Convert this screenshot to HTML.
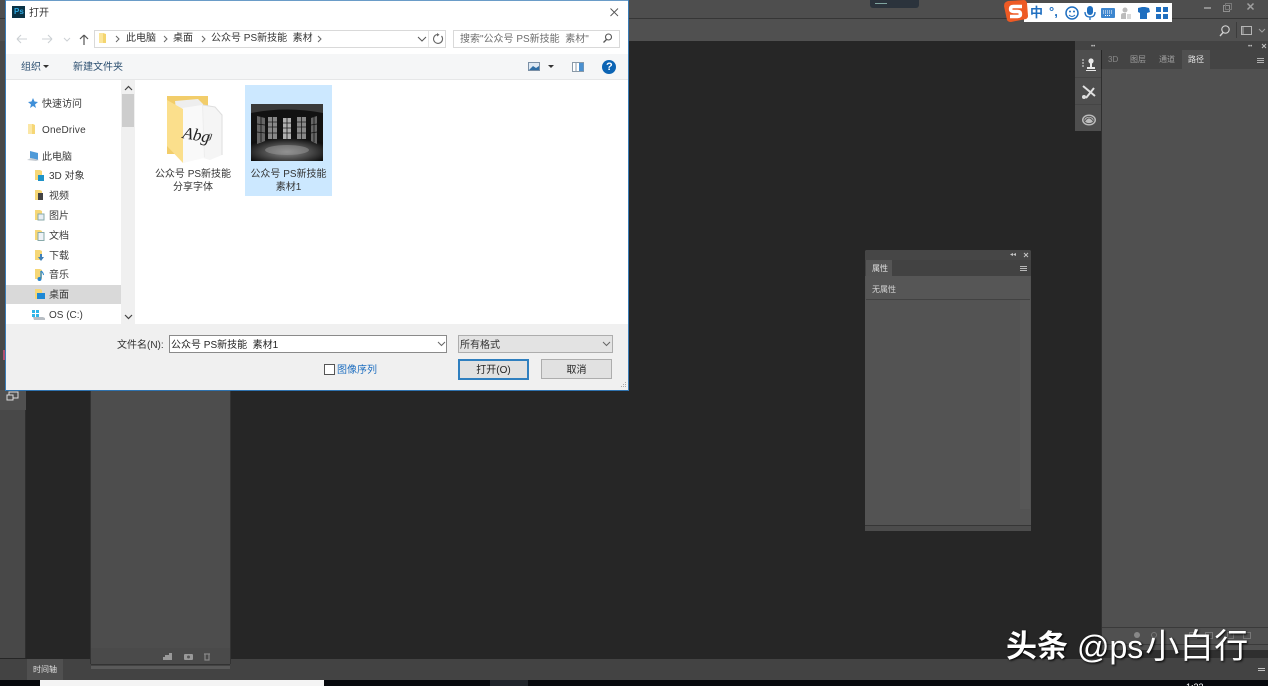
<!DOCTYPE html>
<html lang="zh">
<head>
<meta charset="utf-8">
<title>打开</title>
<style>
html,body{margin:0;padding:0;background:#262626;}
#r{position:relative;width:1268px;height:686px;overflow:hidden;background:#262626;font-family:"Liberation Sans","Noto Sans CJK SC",sans-serif;font-size:10px;color:#222;}
.a{position:absolute;}
.t{position:absolute;white-space:nowrap;line-height:14px;}
.n{font-size:10px;color:#3a3a3a;}
svg{position:absolute;overflow:visible;}
.p{font-size:8px;color:#a8a8a8;}
</style>
</head>
<body>
<div id="r">
<!-- Photoshop chrome -->
<div class="a" style="left:0;top:0;width:1268px;height:18px;background:#4e4e4e"></div>
<div class="a" style="left:0;top:18px;width:1268px;height:1px;background:#363636"></div>
<div class="a" style="left:0;top:19px;width:1268px;height:22px;background:#505050"></div>
<div class="a" style="left:870px;top:0;width:49px;height:8px;background:#2b333c;border-radius:0 0 3px 3px"></div>
<div class="a" style="left:875px;top:3px;width:12px;height:1px;background:#7fa5a0"></div>
<div class="a" style="left:0;top:41px;width:26px;height:617px;background:#484848"></div>
<div class="a" style="left:25px;top:41px;width:1px;height:617px;background:#2e2e2e"></div>
<!-- window controls -->
<div class="a" style="left:1204px;top:7px;width:7px;height:2px;background:#8f8f8f"></div>
<div class="a" style="left:1223px;top:5px;width:5px;height:5px;border:1px solid #8f8f8f"></div>
<div class="a" style="left:1225px;top:3px;width:5px;height:5px;border:1px solid #777"></div>
<svg style="left:1246px;top:2px" width="10" height="10"><path d="M1.500 1.500L7.500 7.500M7.500 1.500L1.500 7.500" stroke="#a0a0a0" stroke-width="1.500"/></svg>
<!-- search + workspace -->
<svg style="left:1218px;top:24px" width="14" height="14"><circle cx="7.500" cy="5.500" r="3.700" fill="none" stroke="#d0d0d0" stroke-width="1.200"/><path d="M5 8.500L2 12" stroke="#d0d0d0" stroke-width="1.400"/></svg>
<div class="a" style="left:1236px;top:22px;width:1px;height:16px;background:#3c3c3c"></div>
<div class="a" style="left:1241px;top:26px;width:9px;height:7px;border:1px solid #b5b5b5"></div>
<div class="a" style="left:1241px;top:26px;width:3px;height:9px;background:#b5b5b5;opacity:.45"></div>
<svg style="left:1258px;top:28px" width="8" height="5"><path d="M1 1L4 4L7 1" stroke="#a0a0a0" fill="none"/></svg>
<!-- right icon strip -->
<div class="a" style="left:1075px;top:41px;width:193px;height:9px;background:#434343"></div>
<div class="a" style="left:1075px;top:50px;width:26px;height:81px;background:#4e4e4e"></div>
<div class="a" style="left:1075px;top:77px;width:26px;height:1px;background:#454545"></div>
<div class="a" style="left:1075px;top:104px;width:26px;height:1px;background:#454545"></div>
<div class="t" style="left:1091px;top:40px;font-size:6px;color:#c0c0c0">••</div>
<div class="t" style="left:1248px;top:40px;font-size:6px;color:#c0c0c0">••</div>
<svg style="left:1261px;top:43px" width="6" height="6"><path d="M1 1L5 5M5 1L1 5" stroke="#c0c0c0"/></svg>
<svg style="left:1081px;top:57px" width="16" height="15"><path d="M1 3h2M1 6h2M1 9h2" stroke="#e0e0e0"/><circle cx="10" cy="4" r="2.600" fill="#e8e8e8"/><path d="M9 6h2v4h3v2H6v-2h3zM5 13h10v1H5z" fill="#e8e8e8"/></svg>
<svg style="left:1081px;top:85px" width="16" height="15"><path d="M2 1L14 11M5 13L13 3" stroke="#e0e0e0" stroke-width="2"/><circle cx="3" cy="12" r="2" fill="#ddd"/></svg>
<svg style="left:1081px;top:112px" width="16" height="15"><ellipse cx="8" cy="8" rx="7" ry="5.500" fill="#bdbdbd"/><ellipse cx="8" cy="8" rx="5" ry="3.600" fill="none" stroke="#555"/><path d="M4 9Q8 3 12 9" stroke="#555" fill="none"/></svg>
<!-- right panel -->
<div class="a" style="left:1102px;top:50px;width:166px;height:19px;background:#444"></div>
<div class="a" style="left:1182px;top:50px;width:28px;height:19px;background:#505050"></div>
<div class="a" style="left:1102px;top:69px;width:166px;height:589px;background:#505050"></div>
<div class="a" style="left:1101px;top:69px;width:1px;height:589px;background:#2f2f2f"></div>
<div class="t p" style="left:1108px;top:53px;color:#8a8a8a">3D</div>
<div class="t p" style="left:1130px;top:53px;color:#a0a0a0">图层</div>
<div class="t p" style="left:1159px;top:53px;color:#a0a0a0">通道</div>
<div class="t p" style="left:1188px;top:53px;color:#e6e6e6">路径</div>
<div class="a" style="left:1257px;top:58px;width:7px;height:1px;background:#b0b0b0;box-shadow:0 2px 0 #b0b0b0,0 4px 0 #b0b0b0"></div>
<div class="a" style="left:1102px;top:627px;width:166px;height:1px;background:#3a3a3a"></div>
<div class="a" style="left:1102px;top:644px;width:166px;height:1px;background:#3a3a3a"></div>
<div class="a" style="left:1102px;top:650px;width:166px;height:9px;background:#2f2f2f"></div>
<div class="a" style="left:1134px;top:632px;width:6px;height:6px;border-radius:50%;background:#888"></div>
<div class="a" style="left:1151px;top:632px;width:4px;height:4px;border-radius:50%;border:1px solid #777"></div>
<div class="a" style="left:1189px;top:632px;width:6px;height:5px;border:1px solid #777"></div>
<div class="a" style="left:1205px;top:632px;width:6px;height:5px;border:1px solid #777"></div>
<div class="a" style="left:1227px;top:632px;width:5px;height:5px;border:1px solid #777"></div>
<div class="a" style="left:1243px;top:632px;width:6px;height:5px;border:1px solid #777"></div>
<!-- properties panel -->
<div class="a" style="left:865px;top:250px;width:166px;height:281px;background:#535353;border-radius:2px"></div>
<div class="a" style="left:865px;top:250px;width:166px;height:10px;background:#464646;border-radius:2px 2px 0 0"></div>
<div class="a" style="left:865px;top:260px;width:166px;height:16px;background:#424242"></div>
<div class="a" style="left:866px;top:260px;width:26px;height:16px;background:#555"></div>
<div class="a" style="left:866px;top:276px;width:164px;height:24px;background:#565656"></div>
<div class="a" style="left:866px;top:299px;width:164px;height:1px;background:#424242"></div>
<div class="a" style="left:1020px;top:300px;width:10px;height:209px;background:#575757"></div>
<div class="a" style="left:865px;top:525px;width:166px;height:1px;background:#363636"></div>
<div class="a" style="left:865px;top:526px;width:166px;height:5px;background:#4c4c4c"></div>
<div class="t p" style="left:872px;top:262px;color:#e0e0e0">属性</div>
<div class="t p" style="left:872px;top:283px;color:#d5d5d5">无属性</div>
<div class="t" style="left:1010px;top:248px;font-size:6px;color:#c5c5c5">◂◂</div>
<svg style="left:1023px;top:252px" width="6" height="6"><path d="M1 1L5 5M5 1L1 5" stroke="#c5c5c5"/></svg>
<div class="a" style="left:1020px;top:266px;width:7px;height:1px;background:#b8b8b8;box-shadow:0 2px 0 #b8b8b8,0 4px 0 #b8b8b8"></div>
<!-- timeline -->
<div class="a" style="left:0;top:659px;width:1102px;height:21px;background:#434343"></div>
<div class="a" style="left:27px;top:659px;width:36px;height:21px;background:#505050"></div>
<div class="t" style="left:33px;top:663px;font-size:8px;color:#e0e0e0">时间轴</div>
<div class="a" style="left:1102px;top:658px;width:166px;height:22px;background:#434343"></div>
<div class="a" style="left:1258px;top:668px;width:7px;height:1px;background:#c0c0c0;box-shadow:0 2px 0 #c0c0c0"></div>
<!-- left floating panel -->
<div class="a" style="left:91px;top:390px;width:139px;height:274px;background:#4d4d4d"></div>
<div class="a" style="left:91px;top:648px;width:139px;height:16px;background:#4a4a4a"></div>
<div class="a" style="left:90px;top:390px;width:1px;height:274px;background:#333"></div>
<div class="a" style="left:230px;top:390px;width:1px;height:274px;background:#333"></div>
<div class="a" style="left:91px;top:664px;width:139px;height:1px;background:#333"></div>
<div class="a" style="left:91px;top:666px;width:139px;height:3px;background:#5a5a5a"></div>
<svg style="left:162px;top:652px" width="50" height="10"><path d="M1 8V5h2V3h4V1h3v7z" fill="#999"/><rect x="22" y="2" width="9" height="6" rx="1" fill="#999"/><circle cx="26.500" cy="5" r="1.500" fill="#555"/><path d="M43 2h4v6h-4zM42 2h6" fill="none" stroke="#888" stroke-width="1.200"/></svg>
<!-- bottom taskbar -->
<div class="a" style="left:0;top:680px;width:1268px;height:6px;background:#06080d"></div>
<div class="a" style="left:40px;top:680px;width:284px;height:6px;background:#f4f4f4"></div>
<div class="a" style="left:490px;top:680px;width:38px;height:6px;background:#20242a"></div>
<div class="t" style="left:1186px;top:680px;font-size:9px;color:#fff">1:22</div>
<!-- left strip bits under the dialog -->
<div class="a" style="left:0;top:390px;width:26px;height:20px;background:#505050"></div>
<svg style="left:6px;top:391px" width="14" height="12"><rect x="3" y="1" width="9" height="6" fill="none" stroke="#ddd"/><rect x="1" y="4" width="6" height="5" fill="#505050" stroke="#ddd"/></svg>
<div class="a" style="left:3px;top:350px;width:3px;height:10px;background:#b05070"></div>
<!-- Sogou IME -->
<div class="a" style="left:1024px;top:3px;width:148px;height:19px;background:#fff"></div>
<svg style="left:1002px;top:0" width="26" height="23"><path d="M6 1L22 0Q24 0 25 3L26 16Q26 18 24 19L9 22Q6 22 5 20L2 6Q2 2 6 1z" fill="#ee5a24"/><path d="M20 6.500H11.500Q8.500 6.500 8.500 9T11.500 11.500H15.500Q18.500 11.500 18.500 14T15.500 16.500H8" fill="none" stroke="#fff" stroke-width="3.400"/></svg>
<div class="t" style="left:1030px;top:6px;font-size:13px;font-weight:bold;color:#1f6fc0">中</div>
<div class="t" style="left:1049px;top:5px;font-size:13px;font-weight:bold;color:#1f6fc0">°,</div>
<svg style="left:1065px;top:5px" width="110" height="16"><circle cx="7" cy="8" r="6" fill="none" stroke="#1f6fc0" stroke-width="1.500"/><circle cx="5" cy="6.500" r="1" fill="#1f6fc0"/><circle cx="9" cy="6.500" r="1" fill="#1f6fc0"/><path d="M4 10Q7 13 10 10" fill="none" stroke="#1f6fc0"/><rect x="22" y="1" width="6" height="9" rx="3" fill="#1f6fc0"/><path d="M20 7Q20 12 25 12T30 7M25 12v3" fill="none" stroke="#1f6fc0" stroke-width="1.300"/><rect x="36" y="3" width="14" height="10" rx="1" fill="#3d86cf"/><path d="M38 6h10M38 8h10M40 10.500h6" stroke="#fff" stroke-dasharray="1 1"/><circle cx="60" cy="5" r="2.500" fill="#bcbcbc"/><path d="M56 14V10Q56 8 59 8H61V14z" fill="#bcbcbc"/><rect x="62" y="9" width="4" height="5" fill="#d8d8d8"/><path d="M73 3L77 2H80L84 3L85 7L82 8V14H75V8L73 7z" fill="#1f6fc0"/><rect x="91" y="2" width="5" height="5" fill="#1f6fc0"/><rect x="98" y="2" width="5" height="5" fill="#1f6fc0"/><rect x="91" y="9" width="5" height="5" fill="#1f6fc0"/><rect x="98" y="9" width="5" height="5" fill="#1f6fc0"/></svg>
<!-- Dialog -->
<div class="a" style="left:6px;top:0;width:622px;height:390px;background:#fff"></div>
<div class="a" style="left:6px;top:0;width:622px;height:1px;background:#6a9cc8"></div>
<div class="a" style="left:5px;top:390px;width:624px;height:1px;background:#2f72ae"></div>
<div class="a" style="left:5px;top:0;width:1px;height:391px;background:#3a7cb6"></div>
<div class="a" style="left:628px;top:0;width:1px;height:391px;background:#3a7cb6"></div>
<div class="a" style="left:12px;top:6px;width:13px;height:12px;background:#0a3244"></div>
<div class="t" style="left:14px;top:5px;font-size:8px;font-weight:bold;color:#2fa8e0">Ps</div>
<div class="t" style="left:29px;top:7px;font-size:10px;color:#333">打开</div>
<svg style="left:609px;top:7px" width="12" height="12"><path d="M1.500 1.500L9 9M9 1.500L1.500 9" stroke="#555" stroke-width=".9"/></svg>
<!-- nav arrows -->
<svg style="left:15px;top:32px" width="85" height="15"><path d="M2 7H12M2 7L6 3M2 7L6 11" stroke="#ccd0d4" stroke-width="1.100" fill="none"/><path d="M37 7H27M37 7L33 3M37 7L33 11" stroke="#ccd0d4" stroke-width="1.100" fill="none"/><path d="M49 6L52 9L55 6" stroke="#ccd0d4" fill="none"/><path d="M69 13V3M69 3L65 7M69 3L73 7" stroke="#555" stroke-width="1.200" fill="none"/></svg>
<!-- address box -->
<div class="a" style="left:94px;top:30px;width:350px;height:16px;border:1px solid #d9d9d9;background:#fff"></div>
<div class="a" style="left:428px;top:31px;width:1px;height:16px;background:#e4e4e4"></div>
<svg style="left:98px;top:33px" width="9" height="11"><path d="M1 0H5L8 1V10H1z" fill="#f4d56f"/><path d="M1 0H5V10H1z" fill="#fbe59a"/></svg>
<svg style="left:114px;top:34px" width="210" height="10"><path d="M2 2L5 5L2 8M50 2L53 5L50 8M88 2L91 5L88 8M204 2L207 5L204 8" fill="none" stroke="#666"/></svg>
<div class="t n" style="left:126px;top:32px;color:#333">此电脑</div>
<div class="t n" style="left:173px;top:32px;color:#333">桌面</div>
<div class="t n" style="left:211px;top:32px;color:#333">公众号 PS新技能&nbsp; 素材</div>
<svg style="left:417px;top:36px" width="10" height="7"><path d="M1 1L5 5L9 1" stroke="#555" fill="none"/></svg>
<svg style="left:432px;top:33px" width="12" height="12"><path d="M9.500 3A4.500 4.500 0 1 1 5 1.500" fill="none" stroke="#666" stroke-width="1.100"/><path d="M5 0V3.500L7.500 1.700z" fill="#666"/></svg>
<!-- search box -->
<div class="a" style="left:453px;top:30px;width:165px;height:16px;border:1px solid #d9d9d9;background:#fff"></div>
<div class="t n" style="left:460px;top:33px;color:#6d6d6d">搜索"公众号 PS新技能&nbsp; 素材"</div>
<svg style="left:602px;top:33px" width="11" height="11"><circle cx="6.500" cy="4" r="3" fill="none" stroke="#555" stroke-width="1.100"/><path d="M4.500 6.500L1.500 9.500" stroke="#555" stroke-width="1.300"/></svg>
<!-- toolbar -->
<div class="a" style="left:6px;top:54px;width:622px;height:25px;background:#f5f6f7"></div>
<div class="a" style="left:6px;top:79px;width:622px;height:1px;background:#e6e7e8"></div>
<div class="t n" style="left:21px;top:61px;color:#2c4f70">组织</div>
<svg style="left:43px;top:65px" width="7" height="5"><path d="M0 0H6L3 3z" fill="#333"/></svg>
<div class="t n" style="left:73px;top:61px;color:#2c4f70">新建文件夹</div>
<svg style="left:528px;top:62px" width="12" height="10"><rect x=".5" y=".5" width="11" height="8" fill="#dfe9f3" stroke="#7a8fa5"/><path d="M1 8L5 4L8 6L11 4V8z" fill="#2f6ea5"/></svg>
<svg style="left:548px;top:65px" width="7" height="5"><path d="M0 0H6L3 3z" fill="#333"/></svg>
<svg style="left:572px;top:61px" width="13" height="12"><rect x=".5" y="1.500" width="11" height="9" fill="#fff" stroke="#8a9aa8"/><rect x="7" y="2" width="4.500" height="8" fill="#4a90d0"/><path d="M4 2V10" stroke="#8a9aa8"/></svg>
<div class="a" style="left:602px;top:60px;width:14px;height:14px;border-radius:50%;background:#0c64b4"></div>
<div class="t" style="left:606px;top:60px;font-size:11px;font-weight:bold;color:#fff">?</div>
<!-- nav pane -->
<div class="a" style="left:6px;top:285px;width:115px;height:19px;background:#d9d9d9"></div>
<svg style="left:27px;top:97px" width="12" height="12"><path d="M6 1L7.500 4.500L11 5L8 7.500L9 11L6 9L3 11L4 7.500L1 5L4.500 4.500z" fill="#3f8fd8"/></svg>
<div class="t n" style="left:42px;top:98px">快速访问</div>
<svg style="left:27px;top:124px" width="9" height="11"><path d="M1 0H6L8 1V10H1z" fill="#f6d776"/><path d="M1 0H5V10H1z" fill="#fbe7a6"/></svg>
<div class="t" style="left:42px;top:124px;font-size:10px;letter-spacing:.2px;color:#3a3a3a">OneDrive</div>
<svg style="left:26px;top:150px" width="14" height="12"><path d="M4 1L12 3V10L4 8z" fill="#4f9ad8"/><path d="M1 10L10 11L13 10L5 8z" fill="#c6ccd2"/></svg>
<div class="t n" style="left:42px;top:151px">此电脑</div>
<svg style="left:34px;top:170px" width="12" height="12"><path d="M1 0H6L8 1V10H1z" fill="#f6d776"/><rect x="4" y="5" width="6" height="6" fill="#1e93c8"/></svg>
<div class="t n" style="left:49px;top:170px">3D 对象</div>
<svg style="left:34px;top:190px" width="12" height="12"><path d="M1 0H6L8 1V10H1z" fill="#f6d776"/><rect x="4" y="3" width="5" height="7" fill="#444"/></svg>
<div class="t n" style="left:49px;top:190px">视频</div>
<svg style="left:34px;top:210px" width="12" height="12"><path d="M1 0H6L8 1V10H1z" fill="#f6d776"/><rect x="4" y="4" width="6" height="6" fill="#e8eef4" stroke="#8aa"/></svg>
<div class="t n" style="left:49px;top:210px">图片</div>
<svg style="left:34px;top:230px" width="12" height="12"><path d="M1 0H6L8 1V10H1z" fill="#f6d776"/><rect x="4" y="2.500" width="6" height="8" fill="#eef2f6" stroke="#8aa"/></svg>
<div class="t n" style="left:49px;top:230px">文档</div>
<svg style="left:34px;top:250px" width="12" height="12"><path d="M1 0H6L8 1V10H1z" fill="#f6d776"/><path d="M6 4V7H4L7 11L10 7H8V4z" fill="#3f7fb8"/></svg>
<div class="t n" style="left:49px;top:250px">下载</div>
<svg style="left:34px;top:269px" width="12" height="13"><path d="M1 0H6L8 1V10H1z" fill="#f6d776"/><path d="M7 2V9" stroke="#2a85cc" stroke-width="1.300"/><circle cx="5.500" cy="10" r="2" fill="#2a85cc"/><path d="M7 2Q9 3 9.500 6" stroke="#2a85cc" fill="none"/></svg>
<div class="t n" style="left:49px;top:269px">音乐</div>
<svg style="left:34px;top:289px" width="12" height="12"><path d="M1 0H6L8 1V10H1z" fill="#f6d776"/><rect x="3" y="4" width="8" height="6" fill="#1e88d4"/></svg>
<div class="t n" style="left:49px;top:289px">桌面</div>
<svg style="left:31px;top:309px" width="15" height="11"><rect x="1" y="1" width="3" height="3" fill="#2fb5e8"/><rect x="5" y="1" width="3" height="3" fill="#2fb5e8"/><rect x="1" y="5" width="3" height="3" fill="#2fb5e8"/><rect x="5" y="5" width="3" height="3" fill="#2fb5e8"/><path d="M2 8H12L14 9V11H3z" fill="#b8bec4"/></svg>
<div class="t n" style="left:49px;top:309px">OS (C:)</div>
<!-- nav scrollbar -->
<div class="a" style="left:121px;top:80px;width:14px;height:244px;background:#f0f0f0"></div>
<div class="a" style="left:122px;top:94px;width:12px;height:33px;background:#cdcdcd"></div>
<svg style="left:124px;top:85px" width="9" height="6"><path d="M1 5L4.500 1.500L8 5" stroke="#444" stroke-width="1.200" fill="none"/></svg>
<svg style="left:124px;top:314px" width="9" height="6"><path d="M1 1L4.500 4.500L8 1" stroke="#444" stroke-width="1.200" fill="none"/></svg>
<!-- file 1: folder -->
<svg style="left:166px;top:94px" width="58" height="72">
<path d="M1 2H42V60H1z" fill="#f2cd6a"/>
<path d="M37 11L49 13L56 21V61L44 66L37 64z" fill="#f5f5f5"/>
<path d="M37 11L49 13L56 21V61" fill="none" stroke="#dedede"/>
<path d="M9 7L32 5L37 10L39 63L17 69z" fill="#eeeeee"/>
<path d="M16 14L36 11L38 64L17 69z" fill="#f9f9f9"/>
<path d="M1 6L17 15V69L1 52z" fill="#fbdf8c"/>
<text x="0" y="0" transform="translate(16 44) rotate(10)" font-family="Liberation Serif,serif" font-style="italic" font-size="17" fill="#222">Abg</text>
<text x="0" y="0" transform="translate(41 44) rotate(8)" font-family="Liberation Serif,serif" font-style="italic" font-size="10" fill="#333">g</text>
</svg>
<div class="t n" style="left:135px;top:168px;width:116px;text-align:center;color:#333">公众号 PS新技能</div>
<div class="t n" style="left:135px;top:181px;width:116px;text-align:center;color:#333">分享字体</div>
<!-- file 2: selected -->
<div class="a" style="left:245px;top:85px;width:87px;height:111px;background:#cce8ff"></div>
<svg style="left:251px;top:104px" width="72" height="57">
<defs>
<radialGradient id="f" cx=".5" cy=".6" r=".6"><stop offset="0" stop-color="#8a8a8a"/><stop offset=".6" stop-color="#444"/><stop offset="1" stop-color="#101010"/></radialGradient>
</defs>
<rect width="72" height="57" fill="#121212"/>
<path d="M0 57V38Q36 30 72 38V57z" fill="url(#f)"/>
<path d="M0 0H72V9Q36 2 0 9z" fill="#3a3a3a"/>
<rect x="17" y="13" width="9" height="22" fill="#888"/><path d="M17 18h9M17 23h9M17 29h9M21.500 13v22" stroke="#1c1c1c" stroke-width=".8"/>
<rect x="32" y="14" width="8" height="21" fill="#b0b0b0"/><path d="M32 19h8M32 24h8M32 29h8M36 14v21" stroke="#1c1c1c" stroke-width=".8"/>
<rect x="46" y="13" width="9" height="22" fill="#888"/><path d="M46 18h9M46 23h9M46 29h9M50.500 13v22" stroke="#1c1c1c" stroke-width=".8"/>
<path d="M6 12L14 14V37L6 40z" fill="#666"/><path d="M6 20L14 21M6 28L14 29M10 13V38" stroke="#111" stroke-width=".8"/>
<path d="M66 12L60 14V37L66 40z" fill="#666"/><path d="M66 20L60 21M66 28L60 29M63 13V38" stroke="#111" stroke-width=".8"/>
<ellipse cx="36" cy="46" rx="22" ry="5" fill="#9a9a9a" opacity=".5"/>
</svg>
<div class="t n" style="left:245px;top:168px;width:87px;text-align:center;color:#333">公众号 PS新技能</div>
<div class="t n" style="left:245px;top:181px;width:87px;text-align:center;color:#333">素材1</div>
<!-- bottom area -->
<div class="a" style="left:6px;top:324px;width:622px;height:66px;background:#f0f0f0"></div>
<div class="t n" style="left:117px;top:339px;color:#333">文件名(N):</div>
<div class="a" style="left:169px;top:335px;width:276px;height:16px;border:1px solid #8a8a8a;background:#fff"></div>
<div class="t n" style="left:171px;top:339px;color:#222">公众号 PS新技能&nbsp; 素材1</div>
<svg style="left:437px;top:341px" width="9" height="6"><path d="M1 1L4.500 4.500L8 1" stroke="#666" fill="none"/></svg>
<div class="a" style="left:458px;top:335px;width:153px;height:16px;border:1px solid #adadad;background:#e3e3e3"></div>
<div class="t n" style="left:460px;top:339px;color:#333">所有格式</div>
<svg style="left:602px;top:341px" width="9" height="6"><path d="M1 1L4.500 4.500L8 1" stroke="#666" fill="none"/></svg>
<div class="a" style="left:324px;top:364px;width:9px;height:9px;border:1px solid #555;background:#fff"></div>
<div class="t n" style="left:337px;top:364px;color:#1f6fc0">图像序列</div>
<div class="a" style="left:458px;top:359px;width:67px;height:17px;border:2px solid #2f7fbf;background:#e1e1e1"></div>
<div class="t n" style="left:458px;top:364px;width:71px;text-align:center;color:#222">打开(O)</div>
<div class="a" style="left:541px;top:359px;width:69px;height:18px;border:1px solid #adadad;background:#e1e1e1"></div>
<div class="t n" style="left:541px;top:364px;width:71px;text-align:center;color:#222">取消</div>
<svg style="left:618px;top:381px" width="9" height="8"><path d="M7 1h1v1H7zM5 3h1v1H5zM7 3h1v1H7zM3 5h1v1H3zM5 5h1v1H5zM7 5h1v1H7z" fill="#a8a8a8"/></svg>
<!-- watermark -->
<div class="t" style="left:1006px;top:628px;font-size:31px;line-height:38px;font-weight:bold;color:#fff;text-shadow:1px 1px 2px #000">头条</div>
<div class="t" style="left:1077px;top:628px;font-size:32px;line-height:38px;color:#fff;text-shadow:1px 1px 2px #000">@ps<span style="font-size:34px;margin-left:2px;letter-spacing:.5px">小白行</span></div>
</div>
</body>
</html>
